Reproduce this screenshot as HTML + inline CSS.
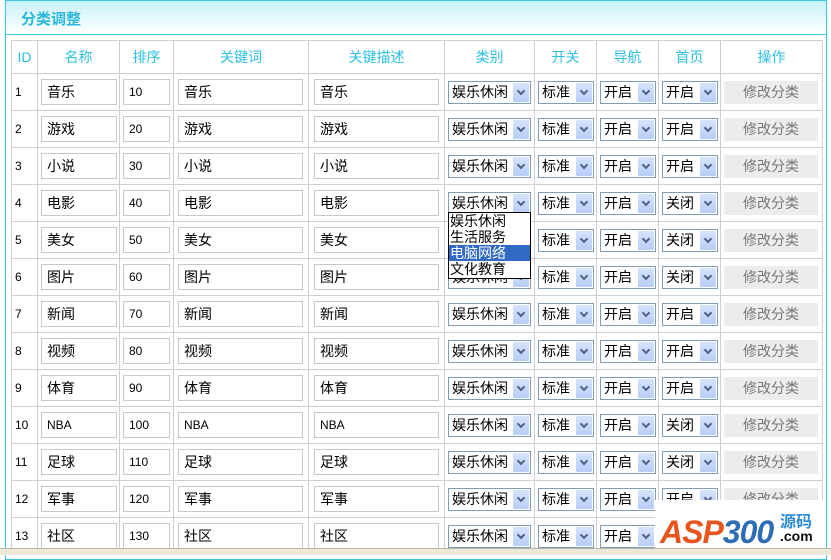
<!DOCTYPE html>
<html><head><meta charset="utf-8">
<style>
*{margin:0;padding:0;box-sizing:border-box}
body{width:831px;height:555px;overflow:hidden;background:#fff;font-family:"Liberation Sans","Noto Sans CJK SC",sans-serif;position:relative}
#frame{position:absolute;left:5px;top:0;width:822px;height:560px;border:1px solid #3fc6e4;border-top:1px solid #3fc6e4}
#hd{position:absolute;left:6px;top:1px;width:820px;height:34px;background:linear-gradient(#c8f1fb,#eefbfe 70%,#fff);border-bottom:1px solid #3fc6e4}
#hd span{position:absolute;left:15px;top:7px;font-size:15px;font-weight:bold;color:#2bb8dc}
table{position:absolute;left:11px;top:40px;border-collapse:collapse;table-layout:fixed;width:811px}
td,th{border:1px solid #cfcfcf;font-size:13px;font-weight:normal;position:relative}
th{height:33px;color:#2cbfe2;font-size:14px;text-align:center}
td{height:37px}
td.id{font-size:12px;padding-left:3px}
.in{position:absolute;top:5px;height:26px;border:1px solid #c8c8c8;font-size:14px;line-height:24px;padding-left:5px;color:#000}
.c2 .in{left:3px;width:76px}
.c3 .in{left:3px;width:47px;font-size:12px}
.c4 .in{left:4px;width:125px}
.c5 .in{left:5px;width:125px}
.sel{position:absolute;top:7px;left:3px;height:23px;border:1px solid #7f9db9;font-size:14px;line-height:20px;padding-left:3px;background:#fff}
.sel i{position:absolute;right:1px;top:1px;width:16px;height:19px;background:linear-gradient(#d6e3fd,#b8cdf8);border-radius:1px}
.sel i:after{content:"";position:absolute;left:5px;top:5px;width:4px;height:4px;border-right:2px solid #4d6185;border-bottom:2px solid #4d6185;transform:rotate(45deg)}
.c6 .sel{width:83px}
.c7 .sel,.c8 .sel,.c9 .sel{width:56px}
.btn{position:absolute;left:3px;top:7px;width:94px;height:23px;background:#ececec;color:#777;font-size:14px;text-align:center;line-height:23px}
#dd{position:absolute;left:448px;top:212px;width:83px;height:67px;border:1px solid #000;background:#fff;font-size:14px;line-height:16px}
#dd div{padding-left:1px;height:16px}
#dd .h{background:#316ac5;color:#fff}
#bar{position:absolute;left:0;top:548px;width:831px;height:7px;background:#ece9d8;border-top:1px solid #b8b5a6}
#logo{position:absolute;left:655px;top:500px;width:168px;height:48px;background:#fff}
#logo .a{position:absolute;left:5px;top:14px;font:italic bold 32px "Liberation Sans",sans-serif;color:#e8541e;letter-spacing:-1px}
#logo .a b{color:#2e6cb4}
#logo .y{position:absolute;left:125px;top:8px;font-size:16px;font-weight:bold;color:#2e8bd6}
#logo .c{position:absolute;left:125px;top:28px;font-size:14px;font-weight:bold;color:#111}
</style></head><body>
<div id="frame"></div>
<div id="hd"><span>分类调整</span></div>
<table>
<colgroup><col style="width:26px"><col style="width:82px"><col style="width:54px"><col style="width:135px"><col style="width:136px"><col style="width:90px"><col style="width:62px"><col style="width:62px"><col style="width:62px"><col style="width:102px"></colgroup>
<tr><th>ID</th><th>名称</th><th>排序</th><th>关键词</th><th>关键描述</th><th>类别</th><th>开关</th><th>导航</th><th>首页</th><th>操作</th></tr>
<tr><td class="id">1</td><td class="c2"><div class="in">音乐</div></td><td class="c3"><div class="in">10</div></td><td class="c4"><div class="in">音乐</div></td><td class="c5"><div class="in">音乐</div></td><td class="c6"><div class="sel">娱乐休闲<i></i></div></td><td class="c7"><div class="sel">标准<i></i></div></td><td class="c8"><div class="sel">开启<i></i></div></td><td class="c9"><div class="sel">开启<i></i></div></td><td><div class="btn">修改分类</div></td></tr>
<tr><td class="id">2</td><td class="c2"><div class="in">游戏</div></td><td class="c3"><div class="in">20</div></td><td class="c4"><div class="in">游戏</div></td><td class="c5"><div class="in">游戏</div></td><td class="c6"><div class="sel">娱乐休闲<i></i></div></td><td class="c7"><div class="sel">标准<i></i></div></td><td class="c8"><div class="sel">开启<i></i></div></td><td class="c9"><div class="sel">开启<i></i></div></td><td><div class="btn">修改分类</div></td></tr>
<tr><td class="id">3</td><td class="c2"><div class="in">小说</div></td><td class="c3"><div class="in">30</div></td><td class="c4"><div class="in">小说</div></td><td class="c5"><div class="in">小说</div></td><td class="c6"><div class="sel">娱乐休闲<i></i></div></td><td class="c7"><div class="sel">标准<i></i></div></td><td class="c8"><div class="sel">开启<i></i></div></td><td class="c9"><div class="sel">开启<i></i></div></td><td><div class="btn">修改分类</div></td></tr>
<tr><td class="id">4</td><td class="c2"><div class="in">电影</div></td><td class="c3"><div class="in">40</div></td><td class="c4"><div class="in">电影</div></td><td class="c5"><div class="in">电影</div></td><td class="c6"><div class="sel">娱乐休闲<i></i></div></td><td class="c7"><div class="sel">标准<i></i></div></td><td class="c8"><div class="sel">开启<i></i></div></td><td class="c9"><div class="sel">关闭<i></i></div></td><td><div class="btn">修改分类</div></td></tr>
<tr><td class="id">5</td><td class="c2"><div class="in">美女</div></td><td class="c3"><div class="in">50</div></td><td class="c4"><div class="in">美女</div></td><td class="c5"><div class="in">美女</div></td><td class="c6"><div class="sel">娱乐休闲<i></i></div></td><td class="c7"><div class="sel">标准<i></i></div></td><td class="c8"><div class="sel">开启<i></i></div></td><td class="c9"><div class="sel">关闭<i></i></div></td><td><div class="btn">修改分类</div></td></tr>
<tr><td class="id">6</td><td class="c2"><div class="in">图片</div></td><td class="c3"><div class="in">60</div></td><td class="c4"><div class="in">图片</div></td><td class="c5"><div class="in">图片</div></td><td class="c6"><div class="sel">娱乐休闲<i></i></div></td><td class="c7"><div class="sel">标准<i></i></div></td><td class="c8"><div class="sel">开启<i></i></div></td><td class="c9"><div class="sel">关闭<i></i></div></td><td><div class="btn">修改分类</div></td></tr>
<tr><td class="id">7</td><td class="c2"><div class="in">新闻</div></td><td class="c3"><div class="in">70</div></td><td class="c4"><div class="in">新闻</div></td><td class="c5"><div class="in">新闻</div></td><td class="c6"><div class="sel">娱乐休闲<i></i></div></td><td class="c7"><div class="sel">标准<i></i></div></td><td class="c8"><div class="sel">开启<i></i></div></td><td class="c9"><div class="sel">开启<i></i></div></td><td><div class="btn">修改分类</div></td></tr>
<tr><td class="id">8</td><td class="c2"><div class="in">视频</div></td><td class="c3"><div class="in">80</div></td><td class="c4"><div class="in">视频</div></td><td class="c5"><div class="in">视频</div></td><td class="c6"><div class="sel">娱乐休闲<i></i></div></td><td class="c7"><div class="sel">标准<i></i></div></td><td class="c8"><div class="sel">开启<i></i></div></td><td class="c9"><div class="sel">开启<i></i></div></td><td><div class="btn">修改分类</div></td></tr>
<tr><td class="id">9</td><td class="c2"><div class="in">体育</div></td><td class="c3"><div class="in">90</div></td><td class="c4"><div class="in">体育</div></td><td class="c5"><div class="in">体育</div></td><td class="c6"><div class="sel">娱乐休闲<i></i></div></td><td class="c7"><div class="sel">标准<i></i></div></td><td class="c8"><div class="sel">开启<i></i></div></td><td class="c9"><div class="sel">开启<i></i></div></td><td><div class="btn">修改分类</div></td></tr>
<tr><td class="id">10</td><td class="c2"><div class="in" style="font-size:12px">NBA</div></td><td class="c3"><div class="in">100</div></td><td class="c4"><div class="in" style="font-size:12px">NBA</div></td><td class="c5"><div class="in" style="font-size:12px">NBA</div></td><td class="c6"><div class="sel">娱乐休闲<i></i></div></td><td class="c7"><div class="sel">标准<i></i></div></td><td class="c8"><div class="sel">开启<i></i></div></td><td class="c9"><div class="sel">关闭<i></i></div></td><td><div class="btn">修改分类</div></td></tr>
<tr><td class="id">11</td><td class="c2"><div class="in">足球</div></td><td class="c3"><div class="in">110</div></td><td class="c4"><div class="in">足球</div></td><td class="c5"><div class="in">足球</div></td><td class="c6"><div class="sel">娱乐休闲<i></i></div></td><td class="c7"><div class="sel">标准<i></i></div></td><td class="c8"><div class="sel">开启<i></i></div></td><td class="c9"><div class="sel">关闭<i></i></div></td><td><div class="btn">修改分类</div></td></tr>
<tr><td class="id">12</td><td class="c2"><div class="in">军事</div></td><td class="c3"><div class="in">120</div></td><td class="c4"><div class="in">军事</div></td><td class="c5"><div class="in">军事</div></td><td class="c6"><div class="sel">娱乐休闲<i></i></div></td><td class="c7"><div class="sel">标准<i></i></div></td><td class="c8"><div class="sel">开启<i></i></div></td><td class="c9"><div class="sel">开启<i></i></div></td><td><div class="btn">修改分类</div></td></tr>
<tr><td class="id">13</td><td class="c2"><div class="in">社区</div></td><td class="c3"><div class="in">130</div></td><td class="c4"><div class="in">社区</div></td><td class="c5"><div class="in">社区</div></td><td class="c6"><div class="sel">娱乐休闲<i></i></div></td><td class="c7"><div class="sel">标准<i></i></div></td><td class="c8"><div class="sel">开启<i></i></div></td><td class="c9"><div class="sel">开启<i></i></div></td><td><div class="btn">修改分类</div></td></tr>
</table>
<div id="dd"><div>娱乐休闲</div><div>生活服务</div><div class="h">电脑网络</div><div>文化教育</div></div>
<div id="logo"><div class="a">ASP<b>300</b></div><div class="y">源码</div><div class="c">.com</div></div>
<div id="bar"></div>
</body></html>
